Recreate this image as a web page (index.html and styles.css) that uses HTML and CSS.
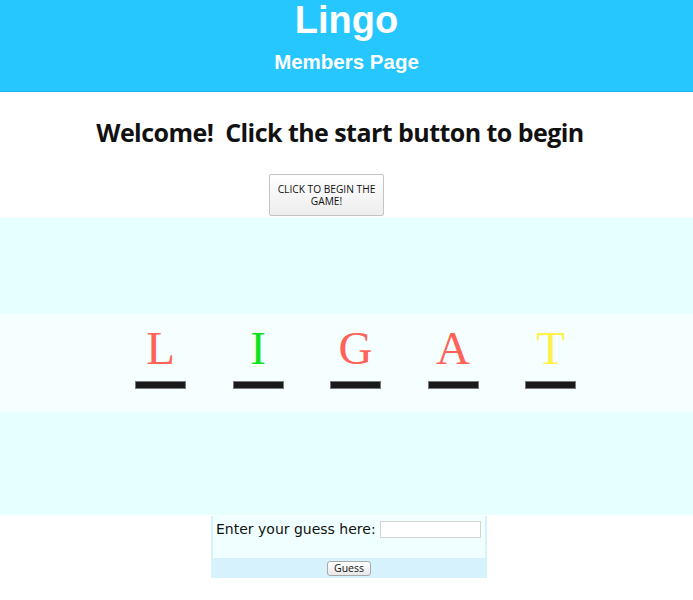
FILE: index.html
```html
<!DOCTYPE html>
<html>
<head>
<meta charset="utf-8">
<title>Lingo</title>
<link rel="stylesheet" href="styles.css">
</head>
<body>
<header class="top">
  <h1 class="title">Lingo</h1>
  <h2 class="subtitle">Members Page</h2>
</header>
<main class="content">
  <h3 class="welcome">Welcome!&nbsp; Click the start button to begin</h3>
  <div class="start-row">
    <button class="start" type="button">CLICK TO BEGIN THE GAME!</button>
  </div>
  <section class="board">
    <div class="band"></div>
    <div class="row">
      <div class="cell"><span class="ch red">L</span><span class="bar"></span></div>
      <div class="cell"><span class="ch green">I</span><span class="bar"></span></div>
      <div class="cell"><span class="ch red">G</span><span class="bar"></span></div>
      <div class="cell"><span class="ch red">A</span><span class="bar"></span></div>
      <div class="cell"><span class="ch yellow">T</span><span class="bar"></span></div>
    </div>
    <div class="band band-low"></div>
  </section>
  <form class="guess">
    <div class="guess-top">
      <label class="guess-label" for="g">Enter your guess here:</label>
      <input class="guess-input" id="g" type="text">
    </div>
    <div class="guess-bottom">
      <button class="guess-btn" type="button">Guess</button>
    </div>
  </form>
</main>
</body>
</html>
```
FILE: styles.css
```css
html, body {
  margin: 0;
  padding: 0;
  background: #ffffff;
}

.top {
  height: 91px;
  background: #26c6fe;
  border-bottom: 1px solid #1bb6ec;
  text-align: center;
  color: #ffffff;
  font-family: "Liberation Sans", Arial, sans-serif;
  font-weight: bold;
}

.title {
  margin: 0;
  padding-top: 0;
  font-size: 38px;
  line-height: 40px;
  font-weight: bold;
}

.subtitle {
  margin: 0;
  padding-top: 10px;
  font-size: 20.5px;
  line-height: 24px;
  font-weight: bold;
}

.welcome {
  margin: 0;
  padding-top: 22px;
  height: 60px;
  text-align: center;
  padding-right: 13px;
  font-family: "Open Sans", sans-serif;
  font-size: 25px;
  line-height: 36px;
  font-weight: bold;
  letter-spacing: -0.55px;
  color: #111111;
}

.start-row {
  display: flex;
  justify-content: center;
  padding-right: 40px;
  height: 44px;
}

.start {
  width: 115px;
  height: 42px;
  padding: 0 4px;
  border: 1px solid #c4c4c4;
  border-radius: 2px;
  background: linear-gradient(#ffffff, #ededed);
  font-family: "Open Sans", sans-serif;
  font-size: 10.2px;
  line-height: 12px;
  color: #111111;
}

.board {
  display: flex;
  flex-direction: column;
}

.band {
  height: 96px;
  background: #e6ffff;
}

.band-low {
  height: 103px;
}

.row {
  height: 98px;
  background: #f5ffff;
  display: flex;
  justify-content: center;
  gap: 46.5px;
  padding-left: 18px;
}

.cell {
  width: 51px;
  display: flex;
  flex-direction: column;
  align-items: center;
}

.ch {
  margin-top: 6px;
  height: 61px;
  font-family: "Liberation Serif", "Times New Roman", serif;
  font-size: 47px;
  line-height: 56px;
}

.red { color: #ff6357; }
.green { color: #13e11d; }
.yellow { color: #fff04a; }

.bar {
  width: 49px;
  height: 6px;
  background: #1a1a1a;
  border: 1px solid #7a7a7a;
}

.guess {
  width: 276px;
  margin: 0 0 0 211px;
  background: #d6f2fd;
}

.guess-top {
  margin: 1px 2px 0 2px;
  height: 42px;
  background: #f0ffff;
  display: flex;
  align-items: flex-start;
  padding: 4px 0 0 3px;
  box-sizing: border-box;
  gap: 4px;
}

.guess-label {
  font-family: "DejaVu Sans", Verdana, sans-serif;
  font-size: 14px;
  line-height: 18px;
  color: #111111;
}

.guess-input {
  width: 101px;
  height: 17px;
  box-sizing: border-box;
  border: 1px solid #d4d4d4;
  margin: 1px 0 0 0;
  padding: 0;
  background: #ffffff;
}

.guess-bottom {
  height: 20px;
  display: flex;
  justify-content: center;
  align-items: center;
}

.guess-btn {
  height: 15px;
  padding: 0 6px;
  border: 1px solid #a9a9a9;
  border-radius: 3px;
  background: linear-gradient(#ffffff, #e8e8e8);
  font-family: "Open Sans", sans-serif;
  font-size: 10.5px;
  line-height: 12px;
  color: #111111;
}
```
